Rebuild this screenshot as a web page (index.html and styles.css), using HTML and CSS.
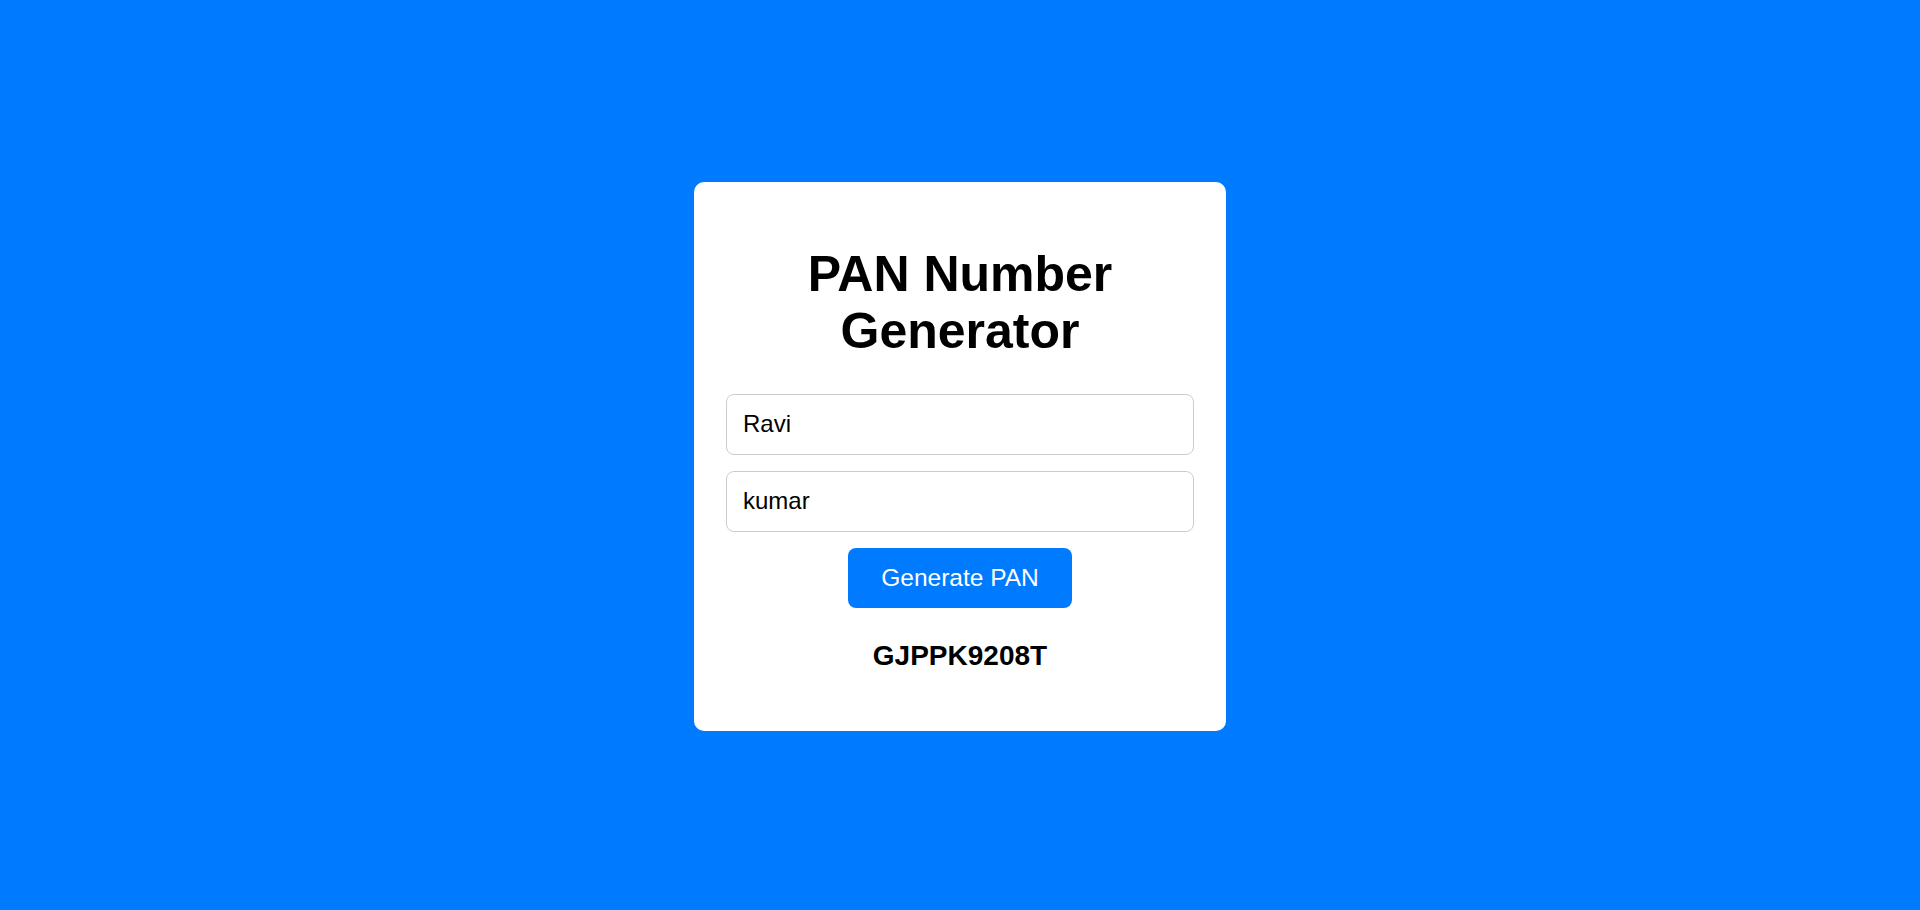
FILE: index.html
```html
<!DOCTYPE html>
<html lang="en">
<head>
<meta charset="utf-8">
<title>PAN Number Generator</title>
<link rel="stylesheet" href="styles.css">
</head>
<body>
  <main class="card">
    <h1 class="title">PAN Number Generator</h1>
    <div class="form">
      <input class="field" type="text" value="Ravi" placeholder="First name">
      <input class="field" type="text" value="kumar" placeholder="Last name">
      <button class="btn" type="button">Generate PAN</button>
    </div>
    <p class="result">GJPPK9208T</p>
  </main>
</body>
</html>
```

FILE: styles.css
```css
* { box-sizing: border-box; }

html, body {
  height: 100%;
}

body {
  margin: 0;
  padding-top: 2px;
  background: #007bff;
  font-family: "Liberation Sans", Arial, sans-serif;
  display: flex;
  align-items: center;
  justify-content: center;
}

.card {
  width: 532px;
  background: #fff;
  border-radius: 10px;
  padding: 32px;
  text-align: center;
}

.title {
  font-size: 50px;
  line-height: 57.5px;
  font-weight: bold;
  margin: 32px 0 33px;
  color: #000;
}

.form {
  display: flex;
  flex-direction: column;
  gap: 16px;
}

.field {
  display: block;
  width: 100%;
  height: 61px;
  padding: 16px;
  font-family: "Liberation Sans", Arial, sans-serif;
  font-size: 24px;
  line-height: 27px;
  color: #000;
  border: 1px solid #ccc;
  border-radius: 8px;
  background: #fff;
  outline: none;
}

.btn {
  align-self: center;
  width: 224px;
  height: 60px;
  padding: 16px 0;
  font-family: "Liberation Sans", Arial, sans-serif;
  font-size: 24.5px;
  line-height: 28px;
  color: #fff;
  background: #007bff;
  border: none;
  border-radius: 8px;
  cursor: pointer;
}

.result {
  margin: 32px 0 27px;
  font-size: 28px;
  line-height: 32px;
  font-weight: bold;
  color: #000;
}
```
